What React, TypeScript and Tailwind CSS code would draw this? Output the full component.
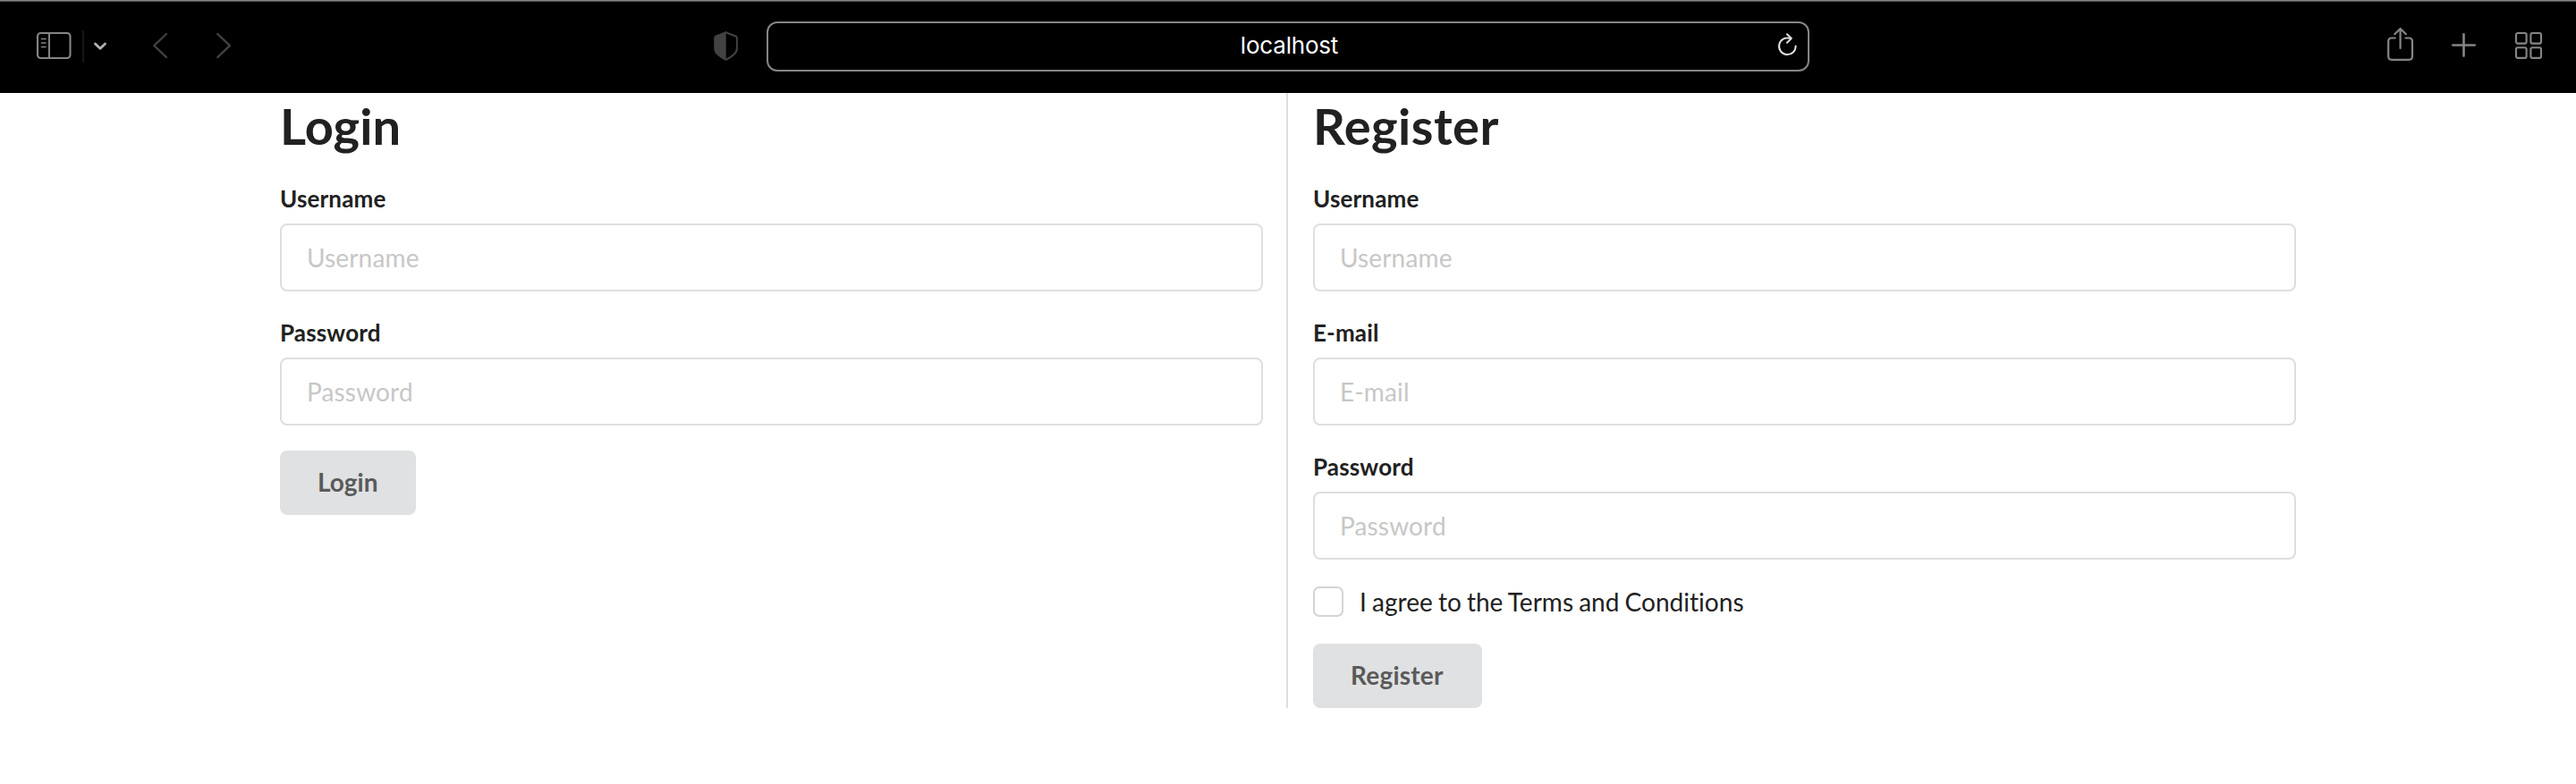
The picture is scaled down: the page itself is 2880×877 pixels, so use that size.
import React from "react";

function Toolbar() {
  return (
    <header className="flex h-[104px] items-start bg-black shadow-[inset_0_1px_0_#858585,inset_0_2px_0_#4d4d4d]">
      <button className="mt-[34px] ml-10" aria-label="Sidebar">
        <svg className="block h-9 w-10" viewBox="0 0 40 36" fill="none" stroke="#858585">
          <rect x="2" y="3" width="36.5" height="28" rx="3.5" strokeWidth="2.1" />
          <path d="M15 3v28" strokeWidth="2" />
          <path d="M6.5 9.5h4.5M6.5 14h4.5M6.5 18.5h4.5" strokeWidth="1.6" strokeLinecap="round" />
        </svg>
      </button>
      <div className="mt-[34px] ml-3 h-9 w-0.5 bg-[#161616]" />
      <button className="mt-11 ml-2.5" aria-label="Tab groups">
        <svg className="block h-4 w-4" viewBox="0 0 16 16" fill="none" stroke="#b2b2b2" strokeWidth="2.8" strokeLinecap="round" strokeLinejoin="round">
          <path d="M2.5 5L8 10.3L13.5 5" />
        </svg>
      </button>
      <button className="mt-[34px] ml-12" aria-label="Back">
        <svg className="block h-[34px] w-5" viewBox="0 0 20 34" fill="none" stroke="#424242" strokeWidth="2.4" strokeLinecap="round" strokeLinejoin="round">
          <path d="M18 4L4.3 17L18 30" />
        </svg>
      </button>
      <button className="mt-[34px] ml-[52px]" aria-label="Forward">
        <svg className="block h-[34px] w-5" viewBox="0 0 20 34" fill="none" stroke="#424242" strokeWidth="2.4" strokeLinecap="round" strokeLinejoin="round">
          <path d="M3.3 4L17 17L3.3 30" />
        </svg>
      </button>
      <button className="mt-[34px] ml-[535px]" aria-label="Privacy report">
        <svg className="block h-9 w-8" viewBox="0 0 32 36">
          <path d="M16.6 2.2L28 6.7Q28.9 7.1 28.9 8V19.5Q28.9 24 26 26.5Q22.5 29.8 16.6 32.8Q10.7 29.8 7.2 26.5Q4.2 24 4.2 19.5V8Q4.2 7.1 5.1 6.7Z" fill="none" stroke="#424242" strokeWidth="2" strokeLinejoin="round" />
          <path d="M16.7 2.2L5.1 6.7Q4.2 7.1 4.2 8V19.5Q4.2 24 7.2 26.5Q10.7 29.8 16.7 32.8Z" fill="#424242" />
        </svg>
      </button>
      <div className="mt-6 ml-[30px] grid h-14 w-[1166px] grid-cols-[48px_1fr_48px] items-center rounded-xl border-2 border-[#858585]">
        <span />
        <span className="pb-0.5 pl-[3px] text-center font-['Inter',sans-serif] text-[26px] leading-8 tracking-[-0.2px] text-white">localhost</span>
        <button className="ml-3" aria-label="Reload">
          <svg className="block h-8 w-7" viewBox="0 0 28 32" fill="none" stroke="#dedede" strokeWidth="2" strokeLinecap="round" strokeLinejoin="round">
            <path d="M16.2 6.9A9.3 9.3 0 1 0 22.6 15.4" />
            <path d="M12.9 2.2L17.9 6.9L12.9 11.8" />
          </svg>
        </button>
      </div>
      <button className="mt-7 ml-[643px]" aria-label="Share">
        <svg className="block h-[42px] w-9" viewBox="0 0 36 42" fill="none" stroke="#858585" strokeWidth="2.2" strokeLinecap="round" strokeLinejoin="round">
          <path d="M11.8 14.5H8Q4.2 14.5 4.2 18.3V35Q4.2 38.8 8 38.8H27.2Q31 38.8 31 35V18.3Q31 14.5 27.2 14.5H23.4" />
          <path d="M17.6 26V4.5M11.3 10.2L17.6 4L23.9 10.2" />
        </svg>
      </button>
      <button className="mt-[34px] ml-9" aria-label="New tab">
        <svg className="block h-[34px] w-[34px]" viewBox="0 0 34 34" fill="none" stroke="#858585" strokeWidth="2.6" strokeLinecap="round">
          <path d="M16.5 4.2V28.6M4.3 16.5H28.7" />
        </svg>
      </button>
      <button className="mt-[34px] ml-[38px]" aria-label="Tab overview">
        <svg className="block h-[34px] w-[34px]" viewBox="0 0 34 34" fill="none" stroke="#858585" strokeWidth="2.1">
          <rect x="3" y="3" width="11.6" height="11.6" rx="1.8" />
          <rect x="19.4" y="3" width="11.6" height="11.6" rx="1.8" />
          <rect x="3" y="19.3" width="11.6" height="11.6" rx="1.8" />
          <rect x="19.4" y="19.3" width="11.6" height="11.6" rx="1.8" />
        </svg>
      </button>
    </header>
  );
}

function Field({ label, type = "text" }: { label: string; type?: string }) {
  return (
    <label className="mb-7 block">
      <span className="mb-2 block h-[38px] text-[26px] leading-9 font-bold tracking-[0.15px]">{label}</span>
      <input
        type={type}
        placeholder={label}
        className="block h-[76px] w-full rounded-lg border-2 border-[#dededf] bg-white px-7 text-[28px] leading-[34px] tracking-[0.15px] outline-none placeholder:text-[#c7c7c7] placeholder:opacity-100"
      />
    </label>
  );
}

function Title({ className = "", children }: { className?: string; children: React.ReactNode }) {
  return <h1 className={`mb-[27px] text-[56px] leading-[73px] font-bold ${className}`}>{children}</h1>;
}

function SubmitButton({ className = "", children }: { className?: string; children: React.ReactNode }) {
  return (
    <button type="button" className={`block h-[72px] rounded-lg bg-[#e0e1e2] pb-0.5 pl-[42px] text-left text-[28px] leading-7 font-bold text-[#5a5a5b] ${className}`}>
      {children}
    </button>
  );
}

export default function App() {
  return (
    <div className="min-h-[877px] bg-white font-['Lato',sans-serif] text-[#212121]">
      <Toolbar />
      <main className="ml-[313px] flex w-[2254px]">
        <form className="w-[1127px] border-r-2 border-[#dededf] pr-[26px]">
          <Title>Login</Title>
          <Field label="Username" />
          <Field label="Password" type="password" />
          <SubmitButton className="w-[152px]">Login</SubmitButton>
        </form>
        <form className="flex-1 pl-7">
          <Title className="tracking-[0.5px]">Register</Title>
          <Field label="Username" />
          <Field label="E-mail" />
          <Field label="Password" type="password" />
          <label className="mb-7 flex h-[38px] items-center">
            <input type="checkbox" className="h-[34px] w-[34px] appearance-none rounded-[7px] border-2 border-[#d4d4d5] bg-white" />
            <span className="ml-[18px] text-[28px] leading-[34px] tracking-[0.03px] [word-spacing:-1.1px] [font-variant-ligatures:none]">I agree to the Terms and Conditions</span>
          </label>
          <SubmitButton className="w-[189px] tracking-[0.2px]">Register</SubmitButton>
        </form>
      </main>
    </div>
  );
}
